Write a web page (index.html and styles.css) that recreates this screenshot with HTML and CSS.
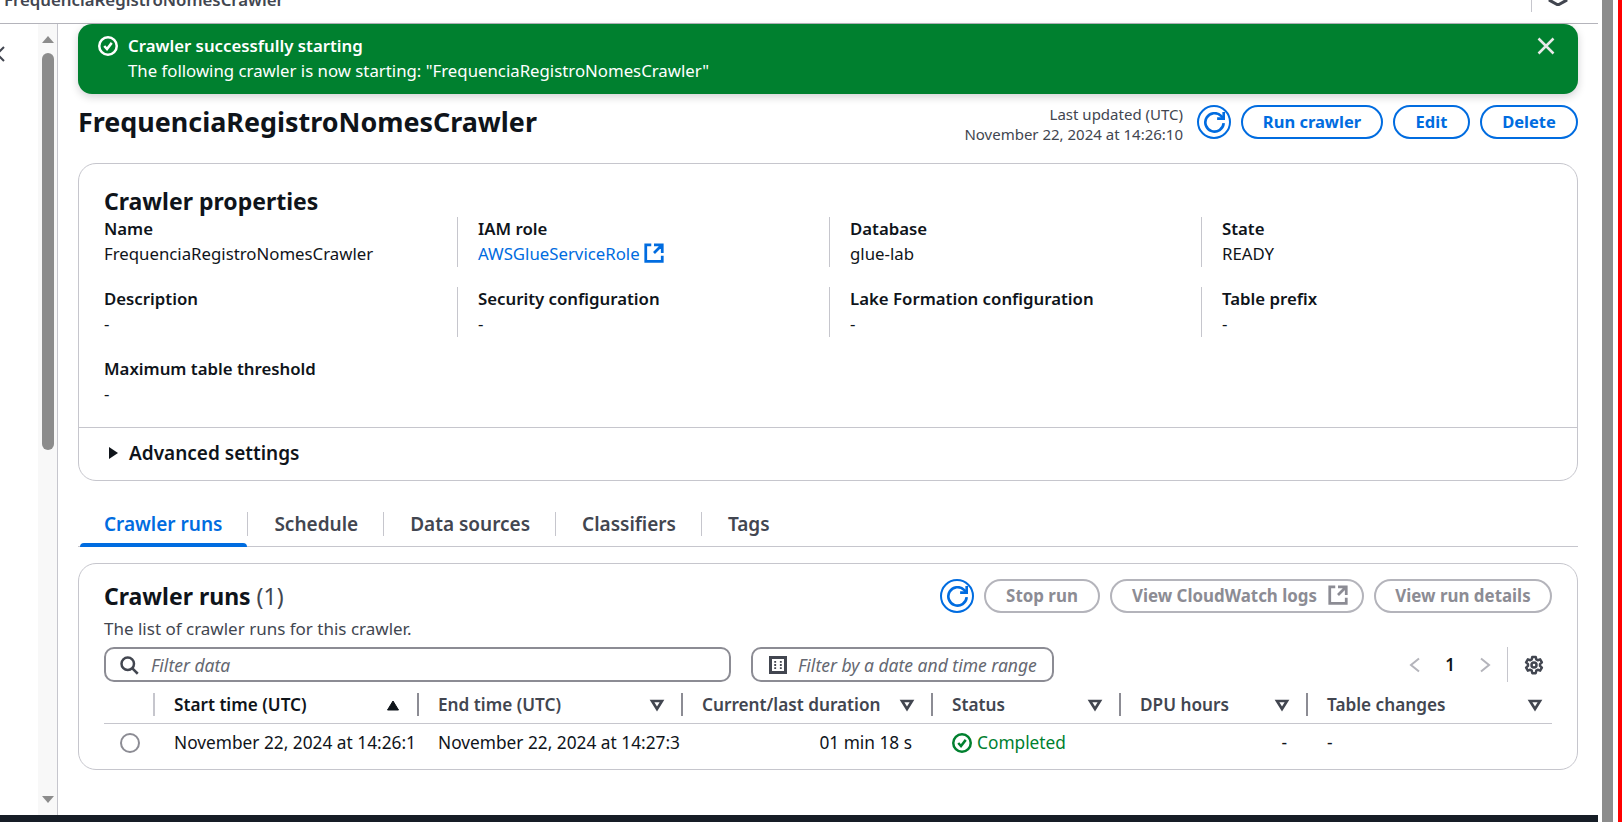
FILE: index.html
```html
<!DOCTYPE html>
<html>
<head>
    <title>FrequenciaRegistroNomesCrawler</title>
    <meta charset="UTF-8">
    <link rel="stylesheet" href="styles.css">
</head>
<body>

<div id="window">
    <header class="topbar">
        <span class="crumb">FrequenciaRegistroNomesCrawler</span>
        <div class="top-right">
            <svg class="top-icon" viewBox="0 0 20 20"><path d="M10 1 18 5.500v9L10 19l-8-4.500v-9z"/></svg>
        </div>
    </header>

    <div class="frame">
        <aside class="sidebar">
            <div class="side-panel">
                <svg class="side-close" viewBox="0 0 18 18"><path d="m2 2 14 14M16 2 2 16"/></svg>
            </div>
            <div class="side-scroll">
                <span class="arrow-up"></span>
                <span class="side-thumb"></span>
                <span class="arrow-down"></span>
            </div>
        </aside>

        <main class="content">
            <div class="flash">
                <svg class="flash-icon" viewBox="0 0 16 16"><circle cx="8" cy="8" r="7"/><path d="m5 8 2.200 2.500L11 5.500"/></svg>
                <div class="flash-text">
                    <strong>Crawler successfully starting</strong>
                    <p>The following crawler is now starting: "FrequenciaRegistroNomesCrawler"</p>
                </div>
                <svg class="flash-close" viewBox="0 0 16 16"><path d="m2 2 12 12M14 2 2 14"/></svg>
            </div>

            <div class="page-head">
                <h1>FrequenciaRegistroNomesCrawler</h1>
                <div class="actions">
                    <div class="updated">Last updated (UTC)<br>November 22, 2024 at 14:26:10</div>
                    <button class="btn-icon"><svg viewBox="0 0 16 16"><path d="M10 5h5V0"/><path d="M15 8.500A7 7 0 1 1 13 3l2 2"/></svg></button>
                    <button class="btn btn-run">Run crawler</button>
                    <button class="btn btn-edit">Edit</button>
                    <button class="btn btn-delete">Delete</button>
                </div>
            </div>

            <section class="card props">
                <h2>Crawler properties</h2>
                <div class="props-grid">
                    <div class="prop"><b>Name</b><span>FrequenciaRegistroNomesCrawler</span></div>
                    <div class="prop"><b>IAM role</b><span><a href="#">AWSGlueServiceRole<svg class="ext" viewBox="0 0 16 16"><path d="M14 8V2H8M14 2 8 8M6 2H2v12h12v-4"/></svg></a></span></div>
                    <div class="prop"><b>Database</b><span>glue-lab</span></div>
                    <div class="prop"><b>State</b><span>READY</span></div>
                    <div class="prop"><b>Description</b><span>-</span></div>
                    <div class="prop"><b>Security configuration</b><span>-</span></div>
                    <div class="prop"><b>Lake Formation configuration</b><span>-</span></div>
                    <div class="prop"><b>Table prefix</b><span>-</span></div>
                    <div class="prop"><b>Maximum table threshold</b><span>-</span></div>
                </div>
                <div class="advanced"><span class="caret-right"></span>Advanced settings</div>
            </section>

            <nav class="tabs">
                <a class="tab active" href="#">Crawler runs</a>
                <a class="tab" href="#">Schedule</a>
                <a class="tab" href="#">Data sources</a>
                <a class="tab" href="#">Classifiers</a>
                <a class="tab last" href="#">Tags</a>
            </nav>

            <section class="card runs">
                <div class="runs-head">
                    <h2>Crawler runs <span class="count">(1)</span></h2>
                    <div class="runs-actions">
                        <button class="btn-icon"><svg viewBox="0 0 16 16"><path d="M10 5h5V0"/><path d="M15 8.500A7 7 0 1 1 13 3l2 2"/></svg></button>
                        <button class="btn off btn-stop">Stop run</button>
                        <button class="btn off btn-logs">View CloudWatch logs<svg class="ext" viewBox="0 0 16 16"><path d="M14 8V2H8M14 2 8 8M6 2H2v12h12v-4"/></svg></button>
                        <button class="btn off btn-details">View run details</button>
                    </div>
                </div>
                <p class="runs-desc">The list of crawler runs for this crawler.</p>

                <div class="filters">
                    <div class="field field-search">
                        <svg viewBox="0 0 16 16"><circle cx="7" cy="7" r="5"/><path d="m15 15-4.500-4.500"/></svg>
                        <span>Filter data</span>
                    </div>
                    <div class="field field-date">
                        <svg viewBox="0 0 16 16"><rect x="2" y="2" width="12" height="12"/><path class="dots" d="M5 5.500h1.500M9.500 5.500H11M5 8h1.500M9.500 8H11M5 10.500h1.500M9.500 10.500H11"/></svg>
                        <span>Filter by a date and time range</span>
                    </div>
                    <div class="pager">
                        <svg class="chev" viewBox="0 0 16 16"><path d="m12 1.500-8 6.500 8 6.500"/></svg>
                        <span class="page-num">1</span>
                        <svg class="chev" viewBox="0 0 16 16"><path d="m4 1.500 8 6.500-8 6.500"/></svg>
                        <div class="pager-settings">
                            <svg viewBox="0 -.5 16 16"><path d="M6.600 1h2.800l.4 2 1.200.7 1.900-.7 1.400 2.400-1.500 1.400v1.400l1.500 1.400-1.400 2.400-1.900-.7-1.200.7-.4 2H6.600l-.4-2-1.200-.7-1.900.7-1.400-2.400 1.500-1.400V6.800L1.700 5.400l1.400-2.400 1.900.7 1.200-.7z"/><circle cx="8" cy="7.500" r="2"/></svg>
                        </div>
                    </div>
                </div>

                <table class="runs-table">
                    <colgroup>
                        <col class="c-radio"><col class="c-start"><col class="c-end"><col class="c-dur"><col class="c-status"><col class="c-dpu"><col class="c-changes">
                    </colgroup>
                    <thead>
                        <tr>
                            <th></th>
                            <th class="sorted"><div><span>Start time (UTC)</span><svg class="sort" viewBox="0 0 16 16"><path d="M8 4 13.500 13h-11z"/></svg></div></th>
                            <th><div><span>End time (UTC)</span><svg class="sort" viewBox="0 0 16 16"><path d="M3 4h10L8 12z"/></svg></div></th>
                            <th><div><span>Current/last duration</span><svg class="sort" viewBox="0 0 16 16"><path d="M3 4h10L8 12z"/></svg></div></th>
                            <th><div><span>Status</span><svg class="sort" viewBox="0 0 16 16"><path d="M3 4h10L8 12z"/></svg></div></th>
                            <th><div><span>DPU hours</span><svg class="sort" viewBox="0 0 16 16"><path d="M3 4h10L8 12z"/></svg></div></th>
                            <th class="th-last"><div><span>Table changes</span><svg class="sort" viewBox="0 0 16 16"><path d="M3 4h10L8 12z"/></svg></div></th>
                        </tr>
                    </thead>
                    <tbody>
                        <tr>
                            <td class="td-radio"><span class="radio"></span></td>
                            <td>November 22, 2024 at 14:26:1</td>
                            <td>November 22, 2024 at 14:27:3</td>
                            <td class="num">01 min 18 s</td>
                            <td class="ok"><svg viewBox="0 0 16 16"><circle cx="8" cy="8" r="7"/><path d="m5 8 2.200 2.500L11 5.500"/></svg>Completed</td>
                            <td class="num">-</td>
                            <td>-</td>
                        </tr>
                    </tbody>
                </table>
            </section>
        </main>
    </div>

    <div class="bottombar"></div>
</div>

<div class="page-scroll"><span class="page-thumb"></span><span class="red-edge"></span></div>

</body>
</html>
```

FILE: styles.css
```css
* {
    box-sizing: border-box;
}

body {
    font-family: "Noto Sans", sans-serif;
    font-size: 17px;
    margin: 0;
    height: 822px;
    display: flex;
    overflow: hidden;
    background-color: #fff;
    color: #0f141a;
}

svg {
    fill: none;
    stroke: currentColor;
    stroke-width: 2;
    flex: none;
}

h1, h2, p {
    margin: 0;
}

a {
    text-decoration: none;
}

#window {
    width: 1598px;
    display: flex;
    flex-direction: column;
}

/* clipped breadcrumb strip */
.topbar {
    height: 24px;
    flex: none;
    display: flex;
    justify-content: space-between;
    border-bottom: 1px solid #b4b4bb;
    overflow: hidden;
}

.crumb {
    margin: -11px 0 0 4px;
    font-size: 16.800px;
    line-height: 22px;
    font-weight: 600;
    color: #424650;
}

.top-right {
    width: 67px;
    height: 12px;
    border-left: 1px solid #c6c6cd;
    padding-left: 16px;
    display: flex;
    align-items: flex-end;
}

.top-icon {
    width: 20px;
    height: 20px;
    margin-bottom: 6px;
    color: #424650;
    stroke-width: 3;
}

.frame {
    flex: 1;
    display: flex;
    min-height: 0;
}

.sidebar {
    width: 58px;
    flex: none;
    display: flex;
    border-right: 1px solid #c6c6cd;
}

.side-panel {
    width: 38px;
    overflow: hidden;
    padding-top: 21px;
}

.side-close {
    display: block;
    width: 18px;
    height: 18px;
    margin-left: -12px;
    color: #424650;
}

.side-scroll {
    width: 19px;
    background-color: #f8f8f8;
    display: flex;
    flex-direction: column;
    align-items: center;
    padding-top: 12px;
}

.arrow-up {
    border-left: 6px solid transparent;
    border-right: 6px solid transparent;
    border-bottom: 7px solid #8c8c8c;
}

.side-thumb {
    width: 12px;
    height: 397px;
    margin-top: 10px;
    border-radius: 6px;
    background-color: #8c8c8c;
}

.arrow-down {
    margin-top: auto;
    margin-bottom: 12px;
    border-left: 6px solid transparent;
    border-right: 6px solid transparent;
    border-top: 7px solid #8c8c8c;
}

.content {
    flex: 1;
    padding: 0 20px 0 20px;
    min-width: 0;
}

.flash {
    height: 70px;
    background-color: #00802f;
    color: #fff;
    border-radius: 14px;
    box-shadow: 0 3px 8px rgba(0, 7, 22, 0.18);
    padding: 9px 24px 0 20px;
    display: flex;
    line-height: 25px;
    font-size: 16.800px;
}

.flash-icon {
    width: 20px;
    height: 20px;
    margin: 3px 10px 0 0;
}

.flash-text {
    flex: 1;
}

.flash-text strong {
    font-weight: 600;
}

.flash-close {
    width: 20px;
    height: 20px;
    margin: 3px -2px 0 0;
    color: #e8e8e8;
}

.page-head {
    display: flex;
    justify-content: space-between;
    align-items: center;
    margin-top: 11px;
    height: 34px;
}

h1 {
    font-size: 26.900px;
    font-weight: 700;
    line-height: 36px;
}

.actions {
    display: flex;
    align-items: center;
}

.updated {
    font-size: 15px;
    line-height: 20px;
    text-align: right;
    color: #424650;
    margin: 4px 14px 0 0;
}

.btn-icon {
    width: 34px;
    height: 34px;
    padding: 0;
    border: 2px solid #006ce0;
    border-radius: 50%;
    background: #fff;
    color: #006ce0;
    display: flex;
    align-items: center;
    justify-content: center;
}

.btn-icon svg {
    width: 21px;
    height: 21px;
}

.btn {
    height: 34px;
    border: 2px solid #006ce0;
    border-radius: 17px;
    background: #fff;
    color: #006ce0;
    font-family: inherit;
    font-size: 16.500px;
    font-weight: 700;
    padding: 0 0 2px;
    margin-left: 10px;
    display: flex;
    align-items: center;
    justify-content: center;
}

.btn-run { width: 142px; }
.btn-edit { width: 77px; }
.btn-delete { width: 98px; }

.card {
    border: 1px solid #c6c6cd;
    border-radius: 18px;
    background-color: #fff;
}

.props {
    margin-top: 24px;
    height: 318px;
    padding-top: 21px;
}

h2 {
    font-size: 23px;
    font-weight: 700;
    line-height: 32px;
}

.props h2 {
    padding-left: 25px;
}

.props-grid {
    display: grid;
    grid-template-columns: 353px 372px 372px 352px;
    grid-auto-rows: 50px;
    row-gap: 20px;
    margin: 0 25px;
    font-size: 16.800px;
}

.prop {
    border-left: 1px solid #c6c6cd;
    padding-left: 20px;
    display: flex;
    flex-direction: column;
    line-height: 25px;
}

.prop:nth-child(4n+1) {
    border-left: none;
    padding-left: 0;
}

.prop b {
    font-weight: 600;
    margin-top: -1px;
}

.prop a {
    color: #006ce0;
}

.ext {
    width: 22px;
    height: 22px;
    margin-left: 3px;
    vertical-align: -4px;
}

.advanced {
    margin-top: 20px;
    height: 53px;
    border-top: 1px solid #c6c6cd;
    padding: 0 0 2px 30px;
    display: flex;
    align-items: center;
    font-size: 19px;
    font-weight: 600;
}

.caret-right {
    border-top: 6px solid transparent;
    border-bottom: 6px solid transparent;
    border-left: 9px solid #0f141a;
    margin-right: 11px;
}

.tabs {
    margin-top: 25px;
    height: 41px;
    display: flex;
    border-bottom: 1px solid #c6c6cd;
    position: relative;
}

.tab {
    height: 24px;
    margin-top: 6px;
    padding: 0 25px 0 26px;
    border-right: 1px solid #c6c6cd;
    color: #424650;
    font-size: 19px;
    font-weight: 600;
    line-height: 24px;
    white-space: nowrap;
}

.tab.last {
    border-right: none;
}

.tab.active {
    color: #006ce0;
    margin-left: 2px;
    padding-left: 24px;
}

/* underline of the open tab, sits over the strip's border */
.tab.active::after {
    content: "";
    position: absolute;
    left: 2px;
    bottom: -1px;
    width: 167px;
    height: 4px;
    border-radius: 4px 4px 0 0;
    background-color: #006ce0;
}

.runs {
    margin-top: 16px;
    height: 207px;
    padding: 15px 25px 0;
}

.runs-head {
    display: flex;
    justify-content: space-between;
    align-items: center;
    height: 34px;
}

.count {
    font-weight: 400;
    color: #424650;
}

.runs-actions {
    display: flex;
    align-items: center;
}

.btn.off {
    border-color: #b4b4bb;
    color: #8c8c94;
    font-size: 16.900px;
}

.btn.off .ext {
    margin-left: 10px;
}

.btn-stop { width: 116px; }
.btn-logs {
    width: 254px;
    padding-left: 20px;
    justify-content: flex-start;
}
.btn-details { width: 178px; }

.runs-desc {
    color: #424650;
    line-height: 22px;
    margin-top: 5px;
}

.filters {
    display: flex;
    align-items: center;
    margin-top: 7px;
    height: 35px;
}

.field {
    height: 35px;
    border: 2px solid #8c8c94;
    border-radius: 10px;
    display: flex;
    align-items: center;
    color: #656871;
    font-style: italic;
    font-size: 17.500px;
}

.field svg {
    width: 20px;
    height: 20px;
    color: #424650;
    margin-right: 10px;
}

.field-date rect {
    stroke-width: 2.400;
}

.field-date .dots {
    stroke-width: 1.500;
}

.field-search {
    width: 627px;
    padding-left: 13px;
}

.field-search svg {
    margin-right: 12px;
}

.field-date {
    width: 303px;
    margin-left: 20px;
    padding-left: 15px;
}

.pager {
    margin-left: auto;
    display: flex;
    align-items: center;
    height: 35px;
}

.chev {
    width: 16px;
    height: 16px;
    color: #b4b4bb;
}

.page-num {
    width: 54px;
    text-align: center;
    font-weight: 600;
    color: #0f141a;
}

.pager-settings {
    height: 35px;
    margin-left: 14px;
    padding: 0 8px 0 16px;
    border-left: 1px solid #c6c6cd;
    display: flex;
    align-items: center;
}

.pager-settings svg {
    width: 20px;
    height: 20px;
    color: #424650;
    stroke-linejoin: round;
}

.runs-table {
    width: 1448px;
    margin-top: 11px;
    border-collapse: collapse;
    table-layout: fixed;
}

.c-radio { width: 49px; }
.c-start { width: 264px; }
.c-end { width: 264px; }
.c-dur { width: 250px; }
.c-status { width: 188px; }
.c-dpu { width: 187px; }
.c-changes { width: 246px; }

th {
    padding: 0 0 7px;
    border-bottom: 1px solid #c6c6cd;
    text-align: left;
    font-size: 17.200px;
    font-weight: 600;
    color: #424650;
}

th div {
    height: 23px;
    border-left: 2px solid #8c8c94;
    padding: 0 16px 0 19px;
    display: flex;
    justify-content: space-between;
    align-items: center;
    white-space: nowrap;
}

th.sorted {
    color: #0f141a;
}

th.sorted div {
    border-left-color: #c6c6cd;
}

th.th-last div {
    padding-right: 9px;
}

.sort {
    width: 16px;
    height: 16px;
    color: #424650;
    stroke-width: 2.600;
}

.sorted .sort {
    fill: #0f141a;
    color: #0f141a;
    stroke-width: 1;
}

td {
    height: 38px;
    padding: 0 0 0 21px;
    font-size: 17.300px;
    white-space: nowrap;
}

.td-radio {
    padding-left: 16px;
}

.radio {
    display: block;
    width: 20px;
    height: 20px;
    border: 2px solid #8c8c94;
    border-radius: 50%;
}

td.num {
    text-align: right;
    padding: 0 19px 0 0;
}

td.ok {
    color: #00802f;
}

td.ok svg {
    width: 20px;
    height: 20px;
    margin-right: 5px;
    vertical-align: -4px;
}

.bottombar {
    height: 7px;
    flex: none;
    background-color: #161d26;
}

.page-scroll {
    flex: 1;
    display: flex;
    padding-left: 4px;
}

.page-thumb {
    width: 11px;
    background-color: #8c8c8c;
}

.red-edge {
    width: 4px;
    margin-left: 5px;
    background-color: #ff0000;
}
```
